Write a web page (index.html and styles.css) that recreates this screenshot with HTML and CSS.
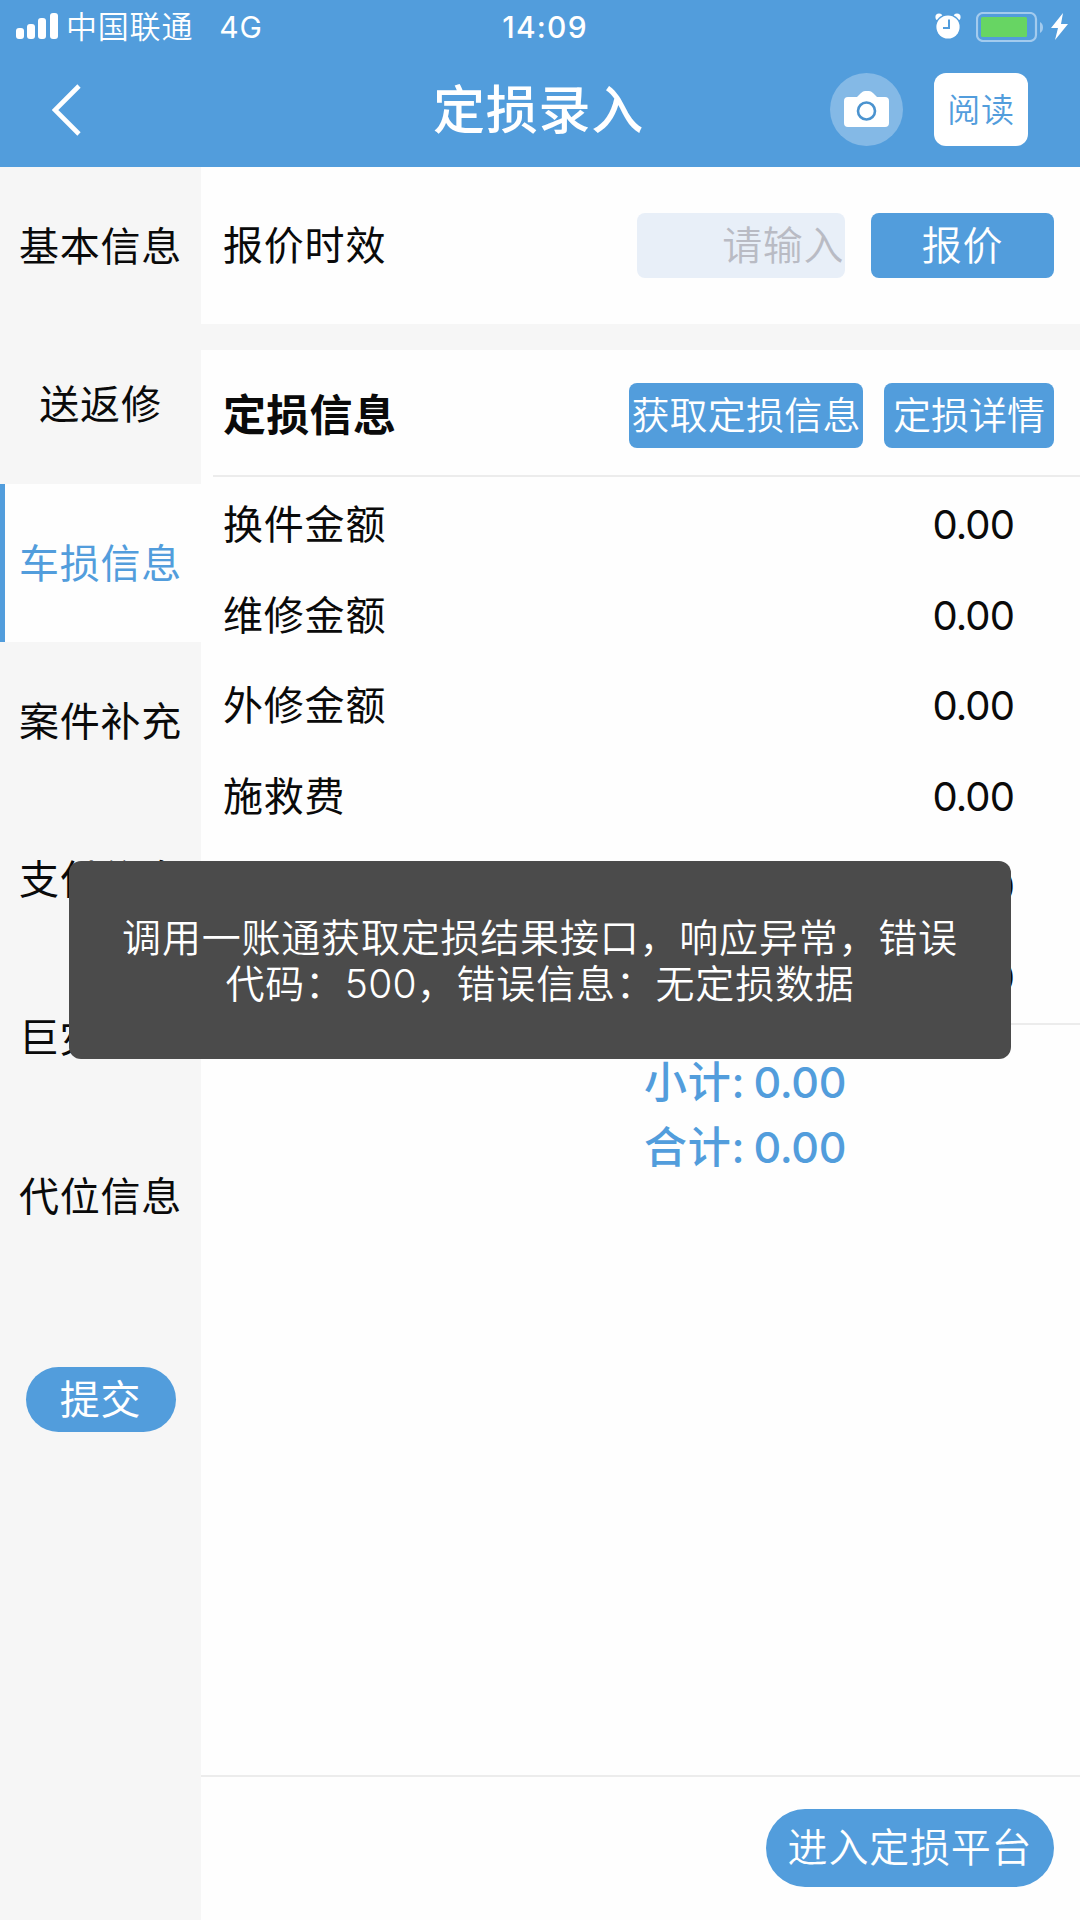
FILE: index.html
```html
<!DOCTYPE html>
<html lang="zh-CN">
<head>
    <meta charset="UTF-8">
    <meta name="viewport" content="width=device-width, initial-scale=1.0">
    <title>定损录入</title>
    <link rel="stylesheet" href="styles.css">
</head>
<body>
    <header class="header">
        <!-- Status bar -->
        <div class="status-bar">
            <div class="status-left">
                <svg class="signal" width="42" height="27" viewBox="0 0 42 27" fill="#fff">
                    <rect x="0" y="15" width="8" height="11" rx="3"/>
                    <rect x="11" y="11" width="8" height="15" rx="3"/>
                    <rect x="22" y="5" width="8" height="21" rx="3"/>
                    <rect x="34" y="0" width="8" height="26" rx="3"/>
                </svg>
                <span class="carrier">中国联通</span>
                <span class="network">4G</span>
            </div>
            <div class="time">14:09</div>
            <div class="status-right">
                <svg class="alarm" width="26" height="27" viewBox="0 0 26 27">
                    <circle cx="4" cy="4" r="3.6" fill="#fff"/>
                    <circle cx="22" cy="4" r="3.6" fill="#fff"/>
                    <circle cx="13" cy="14" r="13" fill="#529ddc"/>
                    <circle cx="13" cy="14" r="11.6" fill="#fff"/>
                    <path d="M14 6.5v8.5H8" fill="none" stroke="#529ddc" stroke-width="2"/>
                </svg>
                <svg class="battery" width="68" height="30" viewBox="0 0 68 30">
                    <rect x="1" y="1" width="59" height="28" rx="6" fill="none" stroke="#a3cbee" stroke-width="2.2"/>
                    <rect x="5" y="5" width="46" height="20" rx="1.5" fill="#67d563"/>
                    <path d="M64 10c4 2 4 9 0 11z" fill="#a3cbee"/>
                </svg>
                <svg class="bolt" width="17" height="27" viewBox="0 0 17 27">
                    <path d="M12 0L0 15h7L4 27 17 11h-7z" fill="#fff"/>
                </svg>
            </div>
        </div>

        <!-- Navigation bar -->
        <div class="nav-bar">
            <div class="nav-left">
                <svg width="30" height="52" viewBox="0 0 30 52">
                    <path d="M27 2L3 26l24 24" fill="none" stroke="#fff" stroke-width="4.6"/>
                </svg>
            </div>
            <h1 class="nav-title">定损录入</h1>
            <div class="nav-right">
                <div class="camera">
                    <svg width="45" height="37" viewBox="0 0 45 37">
                        <path d="M4 6h9l4-4q2-2 4-2h4q2 0 4 2l4 4h8q4 0 4 4v22q0 4-4 4H4q-4 0-4-4V10q0-4 4-4z" fill="#fff"/>
                        <circle cx="22.5" cy="20" r="8.5" fill="none" stroke="#4b93cf" stroke-width="2.6"/>
                    </svg>
                </div>
                <div class="read-btn">阅读</div>
            </div>
        </div>
    </header>

    <div class="main">
        <!-- Side menu -->
        <nav class="sidebar">
            <div class="menu-item">基本信息</div>
            <div class="menu-item">送返修</div>
            <div class="menu-item active">车损信息</div>
            <div class="menu-item">案件补充</div>
            <div class="menu-item">支付信息</div>
            <div class="menu-item">巨灾信息</div>
            <div class="menu-item">代位信息</div>
            <div class="submit-btn">提交</div>
        </nav>

        <div class="content">
            <div class="quote">
                <span class="label">报价时效</span>
                <input class="quote-input" type="text" placeholder="请输入">
                <div class="btn quote-btn">报价</div>
            </div>

            <div class="damage">
                <div class="damage-head">
                    <h2 class="damage-title">定损信息</h2>
                    <div class="btn fetch-btn">获取定损信息</div>
                    <div class="btn detail-btn">定损详情</div>
                </div>

                <div class="amounts">
                    <div class="row"><span>换件金额</span><span class="value">0.00</span></div>
                    <div class="row"><span>维修金额</span><span class="value">0.00</span></div>
                    <div class="row"><span>外修金额</span><span class="value">0.00</span></div>
                    <div class="row"><span>施救费</span><span class="value">0.00</span></div>
                    <div class="row"><span></span><span class="value">0.00</span></div>
                    <div class="row"><span></span><span class="value">0.00</span></div>
                </div>

                <div class="totals">
                    <div class="total">小计: <span class="total-num">0.00</span></div>
                    <div class="total">合计: <span class="total-num">0.00</span></div>
                </div>
            </div>

            <div class="footer">
                <div class="platform-btn">进入定损平台</div>
            </div>
        </div>
    </div>

    <!-- Error message -->
    <div class="toast">
        <div>调用一账通获取定损结果接口，响应异常，错误</div>
        <div>代码：<span class="toast-code">500</span>，错误信息：无定损数据</div>
    </div>
</body>
</html>
```
FILE: styles.css
```css
* {
    box-sizing: border-box;
}

body {
    margin: 0;
    height: 1920px;
    display: flex;
    flex-direction: column;
    overflow: hidden;
    background-color: #fefefe;
    color: #0a0a0a;
    font-family: Inter, "Noto Sans CJK SC", sans-serif;
    font-size: 40px;
    line-height: 48px;
    letter-spacing: 0.8px;
    white-space: nowrap;
}

/* Header */
.header {
    height: 167px;
    background-color: #529ddc;
    color: #fff;
}

.status-bar {
    height: 53px;
    padding: 0 12px 0 16px;
    display: grid;
    grid-template-columns: 1fr auto 1fr;
    align-items: center;
    font-size: 30px;
}

.status-left, .status-right {
    display: flex;
    align-items: center;
}

.status-right {
    justify-content: flex-end;
}

.carrier {
    margin-left: 8px;
    padding-top: 1px;
    font-size: 31px;
    font-weight: 350;
}

.network {
    margin-left: 26px;
}

.time {
    padding: 1px 0 0 6px;
    font-weight: 500;
    letter-spacing: 1.2px;
}

.battery {
    margin: 0 7px 0 15px;
}

.nav-bar {
    height: 112px;
    padding: 0 52px;
    display: grid;
    grid-template-columns: 1fr auto 1fr;
    align-items: center;
}

.nav-left {
    padding-top: 1px;
    display: flex;
}

.nav-title {
    margin: 0;
    padding: 3px 3px 0 0;
    font-size: 52px;
    font-weight: 500;
    line-height: 60px;
}

.nav-right {
    display: flex;
    justify-content: flex-end;
    gap: 31px;
}

.camera {
    width: 73px;
    height: 73px;
    border-radius: 50%;
    background-color: #84b9e6;
    display: flex;
    align-items: center;
    justify-content: center;
}

.read-btn {
    width: 94px;
    height: 73px;
    border-radius: 12px;
    background-color: #fff;
    color: #529ddc;
    font-size: 33px;
    font-weight: 350;
    line-height: 75px;
    text-align: center;
}

/* Page body */
.main {
    flex: 1;
    display: flex;
}

.sidebar {
    width: 201px;
    background-color: #f6f6f6;
}

.menu-item {
    height: 158.3px;
    line-height: 160px;
    text-align: center;
}

.menu-item.active {
    border-left: 5px solid #529ddc;
    padding-right: 5px;
    background-color: #fefefe;
    color: #529ddc;
}

.submit-btn {
    width: 150px;
    height: 65px;
    margin: 92px auto 0;
    border-radius: 33px;
    background-color: #529ddc;
    color: #fff;
    line-height: 65px;
    text-align: center;
}

.content {
    flex: 1;
    display: flex;
    flex-direction: column;
}

.btn {
    height: 65px;
    border-radius: 8px;
    background-color: #529ddc;
    color: #fff;
    font-weight: 350;
    line-height: 65px;
    text-align: center;
}

.quote {
    height: 157px;
    padding: 0 26px 0 22px;
    display: flex;
    align-items: center;
}

.label {
    flex: 1;
}

.quote-input {
    width: 208px;
    height: 65px;
    margin-right: 26px;
    padding: 0 1px;
    border: none;
    border-radius: 8px;
    background-color: #e8eff8;
    font: inherit;
    letter-spacing: 0.6px;
    text-align: right;
}

.quote-input::placeholder {
    color: #b9bbc4;
    font-weight: 350;
}

.quote-btn {
    width: 183px;
}

.damage {
    flex: 1;
    border-top: 26px solid #f6f6f6;
}

.damage-head {
    height: 127px;
    margin-left: 12px;
    padding: 5px 26px 0 10px;
    border-bottom: 2px solid #ececec;
    display: flex;
    align-items: center;
}

.damage-title {
    flex: 1;
    margin: 0;
    font-size: 43px;
    font-weight: 600;
    letter-spacing: 0.3px;
}

.fetch-btn {
    width: 234px;
    margin-right: 21px;
    font-size: 38px;
    letter-spacing: 0.2px;
}

.detail-btn {
    width: 170px;
    font-size: 38px;
    letter-spacing: 0;
}

.amounts {
    padding: 3px 66px 0 22px;
    border-bottom: 2px solid #ececec;
}

.row {
    height: 90.5px;
    display: flex;
    align-items: center;
    justify-content: space-between;
}

.value {
    letter-spacing: -0.9px;
}

.totals {
    padding: 25px 234px 0 0;
    color: #529ddc;
    font-size: 43px;
    font-weight: 500;
    line-height: 65px;
    text-align: right;
    word-spacing: -4px;
}

.total-num {
    letter-spacing: -0.4px;
}

.footer {
    height: 145px;
    padding: 32px 26px 0 0;
    border-top: 2px solid #ececec;
    display: flex;
    justify-content: flex-end;
}

.platform-btn {
    width: 288px;
    height: 78px;
    border-radius: 39px;
    background-color: #529ddc;
    color: #fff;
    font-weight: 350;
    line-height: 78px;
    text-align: center;
}

/* Toast lies over the page */
.toast {
    position: absolute;
    top: 861px;
    left: 69px;
    width: 942px;
    height: 198px;
    padding-top: 54px;
    border-radius: 12px;
    background-color: #4b4b4b;
    color: #fff;
    font-size: 39px;
    font-weight: 350;
    line-height: 46px;
    text-align: center;
}

.toast-code {
    letter-spacing: 0.2px;
}
```
